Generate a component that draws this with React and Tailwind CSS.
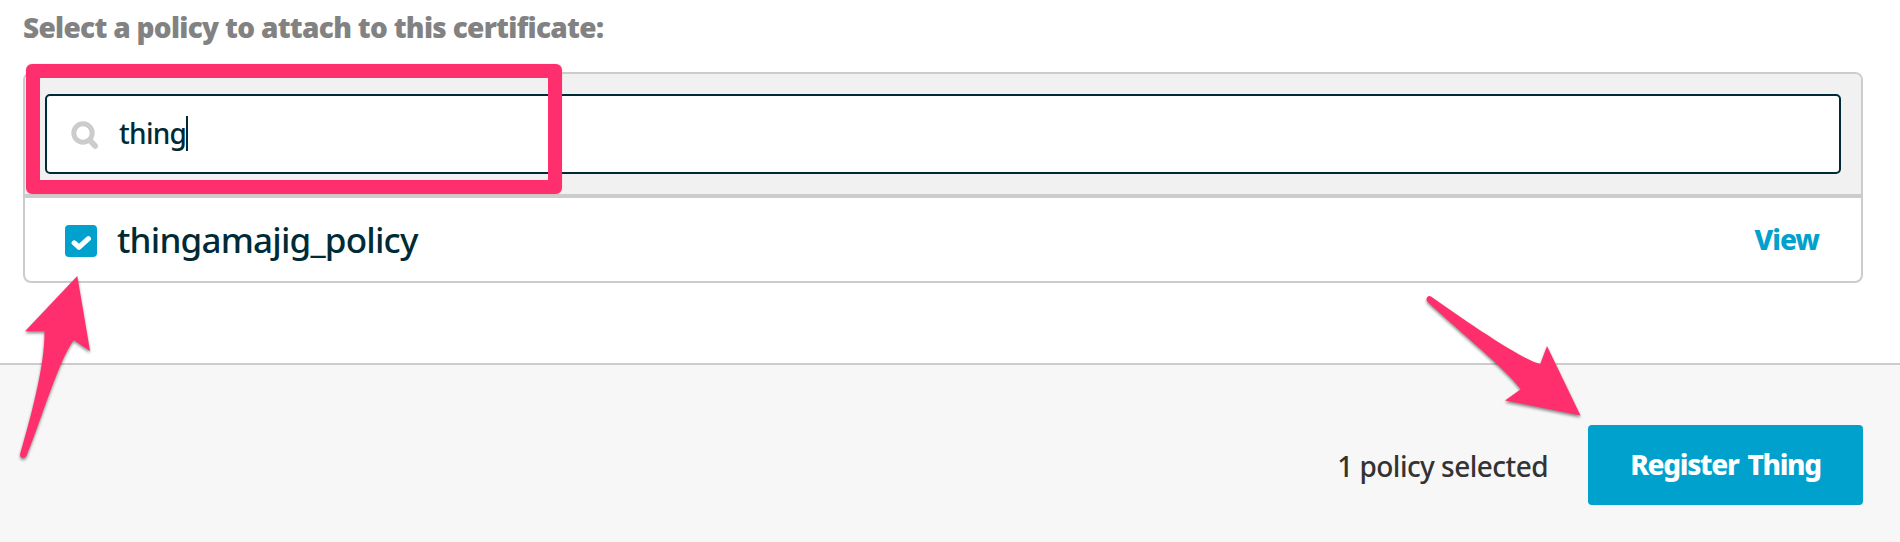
function SearchIcon() {
  return (
    <svg className="mt-0.5 h-7 w-7 shrink-0" viewBox="0 0 28 28" fill="none" stroke="#cccccc">
      <circle cx="12" cy="12" r="9.2" strokeWidth="5" />
      <path d="M19 19.5L24.2 25" strokeWidth="5.6" strokeLinecap="round" />
    </svg>
  );
}

function Checkbox() {
  return (
    <span className="mt-[3px] flex h-8 w-8 shrink-0 items-center justify-center rounded bg-[#00a1cc]">
      <svg className="h-8 w-8" viewBox="0 0 32 32" fill="none" stroke="#ffffff">
        <path d="M9.2 17.9L14.1 22.2L23.4 13.7" strokeWidth="5.2" strokeLinecap="round" strokeLinejoin="round" />
      </svg>
    </span>
  );
}

function Annotations() {
  return (
    <>
      <div className="pointer-events-none absolute left-[26px] top-[64px] h-[130px] w-[536px] rounded-[6px] border-[14px] border-[#ff2f6d] shadow-[0_0_1px_rgba(255,47,109,0.6)]" />
      <svg
        className="pointer-events-none absolute left-0 top-0 h-[542px] w-[1900px] drop-shadow-[0_2px_1.5px_rgba(0,0,0,0.45)]"
        viewBox="0 0 1900 542"
        fill="#ff2f6d"
      >
        <path d="M77.3 276L25 331.3L44.5 331.3C45 362 33 410 20.1 454C19.5 458.5 25 459.5 26.6 455.5C42 418 58 362 73.7 340L90 351Z" />
        <path d="M1580.5 415.5L1547 346L1540.3 364C1527 362 1475 328 1431 296.6C1428 294.5 1424.5 299 1428 302.2C1460 332 1508 371 1520.7 389.3L1505 400.5Z" />
      </svg>
    </>
  );
}

export default function App() {
  return (
    <div className="relative flex h-[542px] w-[1900px] flex-col overflow-hidden bg-white font-['Noto_Sans',sans-serif]">
      <main className="h-[363px] px-[23px] pr-[37px]">
        <h2 className="flex h-[72px] pt-[7px] text-[28px] font-black leading-10 tracking-[-0.7px] text-[#828282]">
          <span className="whitespace-nowrap">Select a policy to attach to this certificate:</span>
        </h2>
        <section className="h-[211px] overflow-hidden rounded-lg border-2 border-[#cccccc] bg-white">
          <div className="border-b-4 border-[#cccccc] bg-[#f1f1f1] p-5">
            <div className="flex h-20 items-center rounded-[5px] border-2 border-[#002b36] bg-white pl-6">
              <SearchIcon />
              <span className="-mt-0.5 ml-5 text-[28px] font-medium leading-10 tracking-[-0.7px] text-[#002b36]">thing</span>
              <span className="-mt-px h-[35px] w-0.5 bg-[#002b36]" />
            </div>
          </div>
          <div className="flex h-[83px] items-center pl-10 pr-[42px]">
            <Checkbox />
            <span className="ml-5 text-[35px] font-medium leading-10 tracking-[-0.8px] text-[#002b36]">thingamajig_policy</span>
            <a className="-mt-px ml-auto text-[28px] font-extrabold leading-10 tracking-[-1px] text-[#00a1cc]">View</a>
          </div>
        </section>
      </main>
      <footer className="flex h-[179px] items-start justify-end border-t-2 border-[#cccccc] bg-[#f7f7f7] pr-[37px] pt-[60px]">
        <span className="mr-10 mt-[21px] text-[28px] font-medium leading-10 tracking-[-0.54px] text-[#333333]">1 policy selected</span>
        <button className="h-20 w-[275px] rounded bg-[#00a1cc] pb-0.5 text-[28px] font-extrabold leading-10 tracking-[-1.3px] text-white [word-spacing:3px]">
          Register Thing
        </button>
      </footer>
      <Annotations />
    </div>
  );
}
